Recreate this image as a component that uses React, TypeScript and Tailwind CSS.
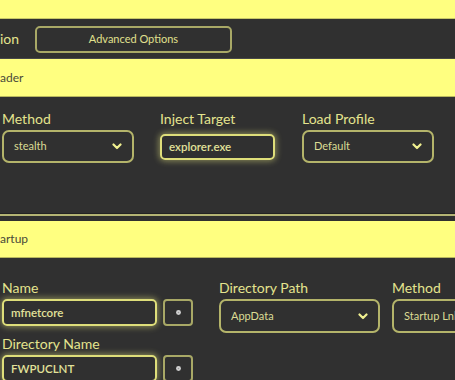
import React from "react";

const Chevron = () => (
  <svg width="10" height="7" viewBox="0 0 10 7" className="shrink-0">
    <path d="M1.5 1.5 L5 5 L8.5 1.5" fill="none" stroke="#f0f090" strokeWidth="2.2" strokeLinecap="round" strokeLinejoin="round" />
  </svg>
);

const Gear = () => (
  <svg width="7" height="7" viewBox="0 0 8 8">
    <circle cx="4" cy="4" r="2.8" fill="#d2d2d2" />
    <circle cx="4" cy="4" r="0.9" fill="#9a9a9a" />
  </svg>
);

function Select({ value, w, h }: { value: string; w: string; h: string }) {
  return (
    <div className={`${w} ${h} rounded-[7px] border-2 border-[#b4b46a] flex items-center justify-between pl-[10px] pr-[10px] text-[11px] text-[#dcdc94] shrink-0`}>
      <span className="whitespace-nowrap">{value}</span>
      <Chevron />
    </div>
  );
}

function GlowInput({ value, w, h }: { value: string; w: string; h: string }) {
  return (
    <div className={`${w} ${h} rounded-[5px] border-2 border-[#dede7a] shadow-[0_0_6px_1px_rgba(255,255,140,0.45)] flex items-center pl-[7px] text-[11.5px] font-semibold text-[#e2e29a] shrink-0`}>
      {value}
    </div>
  );
}

export default function App() {
  return (
    <div className="w-[455px] h-[380px] overflow-hidden bg-[#303030] font-['Lato','Open_Sans',sans-serif]">
      <div className="h-[19px] bg-[#ffff80] border-b border-[#c8c868]" />
      <div className="h-[40px] flex items-center border-b border-[#484848]">
        <span className="w-[35px] text-[14px] text-[#e4e48e] leading-none">ion</span>
        <button className="w-[197px] h-[27px] mt-[1px] rounded-[5px] border-2 border-[#a8a866] text-[11px] text-[#e0e08e] flex items-center justify-center">
          Advanced Options
        </button>
      </div>
      <div className="h-[38px] bg-[#ffff80] border-b border-[#b8b85e] flex items-center text-[12px] text-[#4a4a3a]">
        ader
      </div>
      <div className="h-[116px] pl-[2px] pt-[13px] flex gap-[26px]">
        <div className="flex flex-col">
          <div className="text-[14px] leading-[17px] text-[#e4e48e] mb-[3px]">Method</div>
          <Select value="stealth" w="w-[132px]" h="h-[33px]" />
        </div>
        <div className="flex flex-col">
          <div className="text-[14px] leading-[17px] text-[#e4e48e] mb-[3px]">Inject Target</div>
          <div className="h-[33px] flex items-center">
            <GlowInput value="explorer.exe" w="w-[115px]" h="h-[26px]" />
          </div>
        </div>
        <div className="flex flex-col ml-[1px]">
          <div className="text-[14px] leading-[17px] text-[#e4e48e] mb-[3px]">Load Profile</div>
          <Select value="Default" w="w-[132px]" h="h-[33px]" />
        </div>
      </div>
      <div className="h-[1px] bg-[#222222]" />
      <div className="h-[2px] bg-[#b4b474]" />
      <div className="h-[5px]" />
      <div className="h-[37px] bg-[#ffff80] border-b border-[#b8b85e] flex items-center text-[12px] text-[#4a4a3a]">
        artup
      </div>
      <div className="pl-[2px] pt-[21px] flex">
        <div className="flex flex-col">
          <div className="text-[14px] leading-[17px] text-[#e4e48e] mb-[3px]">Name</div>
          <div className="flex gap-[6px]">
            <GlowInput value="mfnetcore" w="w-[155px]" h="h-[27px]" />
            <div className="w-[30px] h-[27px] rounded-[4px] border-2 border-[#a8a866] flex items-center justify-center">
              <Gear />
            </div>
          </div>
          <div className="text-[14px] leading-[17px] text-[#e4e48e] mt-[9px] mb-[3px]">Directory Name</div>
          <div className="flex gap-[6px]">
            <GlowInput value="FWPUCLNT" w="w-[155px]" h="h-[27px]" />
            <div className="w-[30px] h-[27px] rounded-[4px] border-2 border-[#a8a866] flex items-center justify-center">
              <Gear />
            </div>
          </div>
        </div>
        <div className="flex flex-col ml-[26px]">
          <div className="text-[14px] leading-[17px] text-[#e4e48e] mb-[3px]">Directory Path</div>
          <Select value="AppData" w="w-[161px]" h="h-[34px]" />
        </div>
        <div className="flex flex-col ml-[12px]">
          <div className="text-[14px] leading-[17px] text-[#e4e48e] mb-[3px]">Method</div>
          <Select value="Startup Lnk" w="w-[150px]" h="h-[34px]" />
        </div>
      </div>
    </div>
  );
}
